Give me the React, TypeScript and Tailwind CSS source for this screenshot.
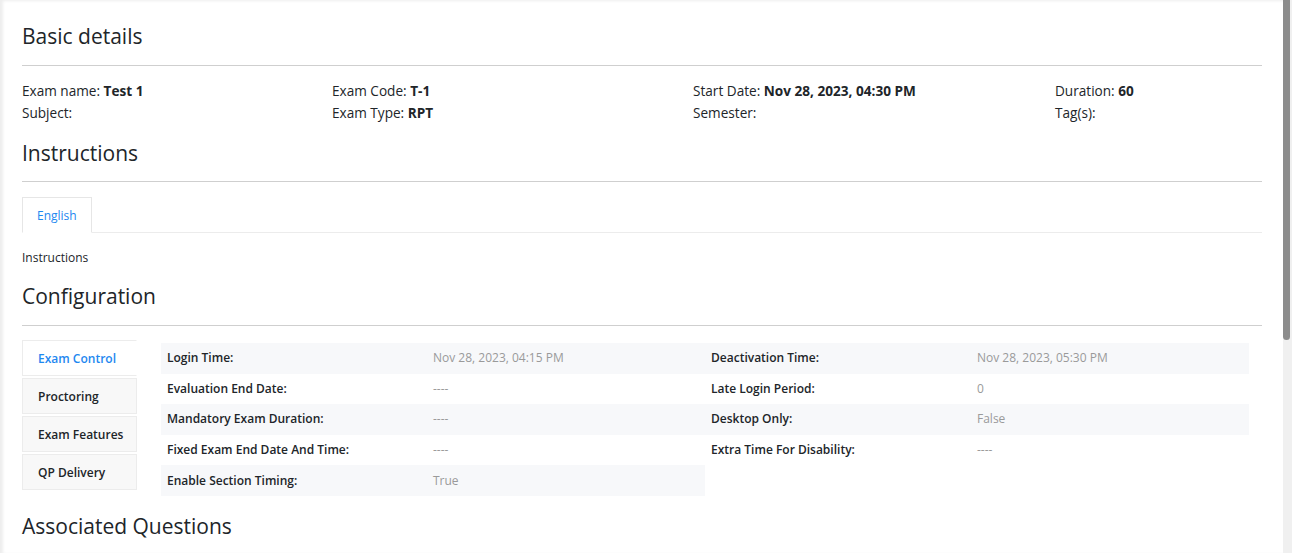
const basicDetails = [
  [
    { label: "Exam name:", value: "Test 1" },
    { label: "Subject:", value: "" },
  ],
  [
    { label: "Exam Code:", value: "T-1" },
    { label: "Exam Type:", value: "RPT" },
  ],
  [
    { label: "Start Date:", value: "Nov 28, 2023, 04:30 PM" },
    { label: "Semester:", value: "" },
  ],
  [
    { label: "Duration:", value: "60" },
    { label: "Tag(s):", value: "" },
  ],
];

const configTabs = ["Exam Control", "Proctoring", "Exam Features", "QP Delivery"];

const controlLeft = [
  ["Login Time:", "Nov 28, 2023, 04:15 PM"],
  ["Evaluation End Date:", "----"],
  ["Mandatory Exam Duration:", "----"],
  ["Fixed Exam End Date And Time:", "----"],
  ["Enable Section Timing:", "True"],
];

const controlRight = [
  ["Deactivation Time:", "Nov 28, 2023, 05:30 PM"],
  ["Late Login Period:", "0"],
  ["Desktop Only:", "False"],
  ["Extra Time For Disability:", "----"],
];

function SectionTitle({ children, className = "pb-[14px]" }: { children: string; className?: string }) {
  return (
    <div className={`border-b border-[#cfcfcf] ${className}`}>
      <h4 className="text-[21px] leading-[29px] text-[#212529]">{children}</h4>
    </div>
  );
}

function SettingsTable({ rows }: { rows: string[][] }) {
  return (
    <div>
      {rows.map(([label, value], i) => (
        <div
          key={label}
          className={`grid grid-cols-2 h-[30.6px] items-center px-[6px] text-[12px] ${
            i % 2 === 0 ? "bg-[#f7f8fa]" : "bg-white"
          }`}
        >
          <span className="font-semibold text-[#212529]">{label}</span>
          <span className="text-[#9a9a9a]">{value}</span>
        </div>
      ))}
    </div>
  );
}

export default function App() {
  return (
    <div
      className="flex h-[553px] w-full overflow-hidden bg-white text-[#212529]"
      style={{ fontFamily: '"Open Sans", "Noto Sans", sans-serif' }}
    >
      <div className="flex-1 shadow-[inset_3px_1px_3px_rgba(0,0,0,0.07)] pl-[22px] pr-[21px] pt-[22px]">
        <SectionTitle>Basic details</SectionTitle>

        <div className="mt-[14px] grid grid-cols-[310px_361px_362px_1fr] text-[13.6px] leading-[22px]">
          {basicDetails.map((col, c) => (
            <div key={c}>
              {col.map((item) => (
                <div key={item.label}>
                  {item.label} <span className="font-bold">{item.value}</span>
                </div>
              ))}
            </div>
          ))}
        </div>

        <div className="mt-[15px]">
          <SectionTitle className="pb-[13px]">Instructions</SectionTitle>
        </div>

        <div className="mt-[15px] flex border-b border-[#ececec]">
          <div className="-mb-px h-[36px] border border-[#e6e6e6] border-b-white bg-white px-[14px] text-[12px] leading-[35px] text-[#1e88f0]">
            English
          </div>
        </div>

        <p className="mt-[16px] text-[12px] leading-[18px]">Instructions</p>

        <div className="mt-[15px]">
          <SectionTitle>Configuration</SectionTitle>
        </div>

        <div className="mt-[14px] flex">
          <div className="flex w-[115px] flex-col gap-[2px] pb-[6px]">
            {configTabs.map((tab, i) => (
              <div
                key={tab}
                className={`h-[36px] whitespace-nowrap border pl-[15px] text-[12px] font-semibold leading-[35px] ${
                  i === 0
                    ? "border-[#ececec] border-r-white bg-white text-[#1e88f0]"
                    : "border-[#ececec] bg-[#f8f8f8] text-[#212529]"
                }`}
              >
                {tab}
              </div>
            ))}
          </div>
          <div className="ml-[24px] mr-[13px] mt-[3px] grid flex-1 grid-cols-2 content-start">
            <SettingsTable rows={controlLeft} />
            <SettingsTable rows={controlRight} />
          </div>
        </div>

        <div className="mt-[16px]">
          <h4 className="text-[21px] leading-[29px]">Associated Questions</h4>
        </div>
      </div>

      {/* page scrollbar */}
      <div className="w-[9px] shrink-0 bg-[#f0f0f0]">
        <div className="h-[340px] w-[7px] rounded-b-[4px] bg-[#8c8c8c]" />
      </div>
    </div>
  );
}
